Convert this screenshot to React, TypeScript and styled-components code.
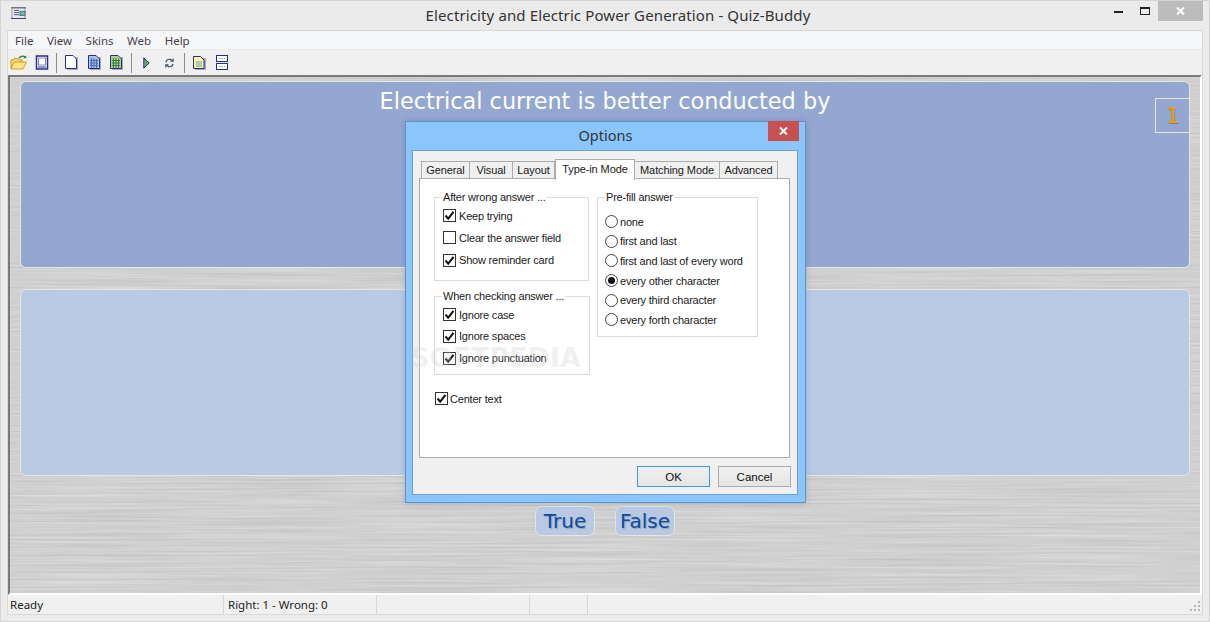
import React from 'react';
import styled, { createGlobalStyle } from 'styled-components';

const GlobalStyle = createGlobalStyle`
  html, body {
    margin: 0;
    padding: 0;
    width: 1210px;
    height: 622px;
    overflow: hidden;
    background: #ebebeb;
  }
  * {
    box-sizing: border-box;
  }
`;

const Window = styled.div`
  position: relative;
  width: 1210px;
  height: 622px;
  display: flex;
  flex-direction: column;
  background: #ebebeb;
  border: 1px solid #d4d4d4;
  font-family: 'Noto Sans', 'Open Sans', sans-serif;
  color: #111;
`;

const TitleBar = styled.div`
  position: relative;
  height: 29px;
  flex: none;
  display: flex;
  align-items: center;
  justify-content: center;
  padding: 0 0 2px 26px;
  font-size: 15px;
  letter-spacing: 0.12px;
  color: #333;
`;

const AppIcon = styled.svg`
  position: absolute;
  left: 9px;
  top: 6px;
`;

const Caption = styled.div`
  position: absolute;
  top: 0;
  right: 6px;
  display: flex;
  align-items: center;
  height: 20px;
`;

const CaptionButton = styled.div<{ $w: number; $close?: boolean }>`
  width: ${p => p.$w}px;
  height: 20px;
  display: flex;
  align-items: center;
  justify-content: center;
  background: ${p => (p.$close ? '#bcbcbc' : 'transparent')};
`;

const Client = styled.div`
  flex: 1;
  margin: 0 6px 6px 6px;
  display: flex;
  flex-direction: column;
  border: 1px solid #d9d9d9;
  border-bottom: none;
  min-height: 0;
`;

const MenuBar = styled.div`
  height: 19px;
  flex: none;
  display: flex;
  align-items: center;
  gap: 13.5px;
  padding: 1px 0 0 7px;
  background: #f5f6f8;
  border-bottom: 1px solid #ececec;
  font-size: 11.5px;
  color: #4a4048;
`;

const ToolBar = styled.div`
  height: 25px;
  flex: none;
  display: flex;
  align-items: center;
  background: #f0f0f0;
`;

const ToolSlot = styled.div`
  width: 22.5px;
  height: 22px;
  display: flex;
  align-items: center;
  justify-content: center;
`;

const ToolSep = styled.div`
  width: 1px;
  height: 20px;
  margin: 0 3.25px;
  background: #8d8d8d;
`;

const Stage = styled.div`
  position: relative;
  flex: 1;
  min-height: 0;
  display: flex;
  flex-direction: column;
  align-items: stretch;
  padding: 4px 10px 0 10px;
  border-top: 2px solid #7a7a7a;
  border-left: 2px solid #7a7a7a;
  border-right: 2px solid #fff;
  border-bottom: 2px solid #fff;
  background-color: #d0d0d0;
  overflow: hidden;
`;

const BrushedMetal = styled.svg`
  position: absolute;
  left: 0;
  top: 0;
  width: 100%;
  height: 100%;
`;

const QuestionCard = styled.div`
  position: relative;
  height: 187px;
  flex: none;
  background: #94a7d1;
  border: 1px solid #e6e6dc;
  border-radius: 6px;
  text-align: center;
  color: #fff;
  font-family: 'DejaVu Sans', sans-serif;
  font-size: 22.4px;
  line-height: 38px;
`;

const NumberBadge = styled.div`
  position: absolute;
  top: 16px;
  right: 0;
  width: 34px;
  height: 35px;
  border: 1px solid #e6e6dc;
  border-right: none;
  color: #f59d00;
  font-size: 22px;
  line-height: 33px;
  text-shadow: 1px 1px 0 #7f7f80;
`;

const AnswerCard = styled.div`
  position: relative;
  height: 187px;
  flex: none;
  margin-top: 21px;
  background: #bac9e4;
  border: 1px solid #e6e6dc;
  border-radius: 6px;
`;

const AnswerRow = styled.div`
  position: relative;
  display: flex;
  justify-content: center;
  gap: 20px;
  margin-top: 30px;
`;

const AnswerButton = styled.div`
  width: 60px;
  height: 30px;
  display: flex;
  align-items: center;
  justify-content: center;
  background: #b9c9e4;
  border: 1px solid #e6e6dc;
  border-radius: 7px;
  color: #0b4da3;
  font-family: 'DejaVu Sans', sans-serif;
  font-size: 20px;
  text-shadow: 1px 1px 1px rgba(90, 90, 90, 0.35);
`;

const StatusBar = styled.div`
  height: 20px;
  flex: none;
  display: flex;
  background: #f0f0f0;
  border-bottom: 1px solid #d9d9d9;
  font-size: 11.5px;
  position: relative;
`;

const StatusCell = styled.div<{ $w?: number; $pad?: number }>`
  ${p => (p.$w ? `width: ${p.$w}px;` : 'flex: 1;')}
  display: flex;
  align-items: center;
  padding-left: ${p => p.$pad ?? 0}px;
  border-right: 1px solid #d6d6d6;
  color: #222;

  &:last-of-type {
    border-right: none;
  }
`;

const Grip = styled.svg`
  position: absolute;
  right: 1px;
  bottom: 2px;
`;

const Dialog = styled.div`
  position: absolute;
  left: 404px;
  top: 120px;
  width: 401px;
  height: 382px;
  display: flex;
  flex-direction: column;
  background: #8ac5fb;
  border: 1px solid #5e93c9;
  box-shadow: 0 0 6px rgba(60, 70, 90, 0.25);
  font-family: 'Liberation Sans', Arial, sans-serif;
`;

const DialogTitle = styled.div`
  position: relative;
  height: 28px;
  flex: none;
  display: flex;
  align-items: center;
  justify-content: center;
  padding-bottom: 2px;
  font-family: 'Noto Sans', sans-serif;
  font-size: 14.5px;
  color: #30353d;
`;

const DialogClose = styled.div`
  position: absolute;
  top: -1px;
  right: 6px;
  width: 31px;
  height: 20px;
  display: flex;
  align-items: center;
  justify-content: center;
  background: #c75050;
`;

const DialogBody = styled.div`
  flex: 1;
  margin: 0 7px 7px 6px;
  padding: 9px 7px 0 6px;
  background: #f0f0f0;
  border: 1px solid #6f9ec9;
  display: flex;
  flex-direction: column;
  min-height: 0;
`;

const TabStrip = styled.div`
  height: 19px;
  flex: none;
  display: flex;
  align-items: flex-end;
  padding-left: 2px;
  position: relative;
  z-index: 1;
  font-size: 11px;
  letter-spacing: -0.1px;
`;

const Tab = styled.div<{ $active?: boolean; $w: number }>`
  width: ${p => p.$w}px;
  height: ${p => (p.$active ? 21 : 18)}px;
  display: flex;
  align-items: center;
  justify-content: center;
  background: ${p => (p.$active ? '#fff' : '#f0f0f0')};
  border: 1px solid #acacac;
  border-bottom: ${p => (p.$active ? 'none' : '1px solid #acacac')};
  margin-left: ${p => (p.$active ? 0 : -1)}px;
  margin-bottom: ${p => (p.$active ? -1 : 0)}px;
  padding-bottom: ${p => (p.$active ? 2 : 0)}px;
  color: #1a1a1a;

  &:first-child {
    margin-left: 0;
  }
`;

const TabPane = styled.div`
  height: 280px;
  flex: none;
  margin-top: -1px;
  padding: 11px 0 0 14px;
  background: #fff;
  border: 1px solid #acacac;
  font-size: 11px;
  letter-spacing: -0.2px;
  color: #1a1a1a;
`;

const Columns = styled.div`
  display: flex;
  align-items: flex-start;
  gap: 7px;
`;

const Column = styled.div`
  width: 156px;
  display: flex;
  flex-direction: column;
  gap: 8px;
`;

const Group = styled.fieldset<{ $w: number; $h: number; $gap: number; $top: number; $left: number }>`
  margin: 0;
  padding: ${p => p.$top}px 0 0 ${p => p.$left}px;
  width: ${p => p.$w}px;
  height: ${p => p.$h}px;
  border: 1px solid #dcdcdc;
  min-inline-size: 0;
  display: flex;
  flex-direction: column;
  gap: ${p => p.$gap}px;
`;

const Legend = styled.legend<{ $shift?: number }>`
  margin-left: ${p => p.$shift ?? -1}px;
  padding: 0 1px;
  font-size: 11px;
  line-height: 14px;
`;

const Option = styled.div<{ $gap?: number }>`
  display: flex;
  align-items: center;
  gap: ${p => p.$gap ?? 3}px;
  height: 15px;
  white-space: nowrap;
`;

const Check = styled.span`
  width: 13px;
  height: 13px;
  flex: none;
  display: flex;
  align-items: center;
  justify-content: center;
  border: 1px solid #333;
  background: #fff;
`;

const Radio = styled.span`
  width: 13px;
  height: 13px;
  flex: none;
  display: flex;
  align-items: center;
  justify-content: center;
  border: 1px solid #444;
  border-radius: 50%;
  background: #fff;
`;

const RadioDot = styled.span`
  width: 7px;
  height: 7px;
  border-radius: 50%;
  background: #111;
`;

const CenterOption = styled(Option)`
  margin-top: 16px;
  margin-left: 1px;
`;

const DialogFooter = styled.div`
  flex: 1;
  display: flex;
  justify-content: flex-end;
  align-items: flex-start;
  gap: 8px;
  padding: 8px 0 0 0;
  margin-right: -1px;
`;

const DialogButton = styled.div<{ $primary?: boolean }>`
  width: 73px;
  height: 21px;
  display: flex;
  align-items: center;
  justify-content: center;
  font-size: 11.5px;
  color: #111;
  background: linear-gradient(#f0f0f0, #e5e5e5);
  border: 1px solid ${p => (p.$primary ? '#3c9bf0' : '#acacac')};
`;

const Watermark = styled.div`
  position: absolute;
  left: 409px;
  top: 342px;
  font-family: 'DejaVu Sans', sans-serif;
  font-size: 27px;
  line-height: 30px;
  font-weight: 700;
  color: rgba(205, 205, 205, 0.28);
  pointer-events: none;
`;

const CheckMark = () => (
  <svg width="11" height="11" viewBox="0 0 11 11">
    <path d="M1.5 5.5 L4.2 8.6 L9.5 1.8" fill="none" stroke="#111" strokeWidth="2" />
  </svg>
);

const CheckOption = ({ label, checked = true }: { label: string; checked?: boolean }) => (
  <Option>
    <Check>{checked && <CheckMark />}</Check>
    {label}
  </Option>
);

const RadioOption = ({ label, checked = false }: { label: string; checked?: boolean }) => (
  <Option $gap={2}>
    <Radio>{checked && <RadioDot />}</Radio>
    {label}
  </Option>
);

const FolderIcon = () => (
  <svg width="18" height="16" viewBox="0 0 18 16">
    <path d="M1 14 V5 H3 L4 3.5 H8 L9 5 H12 V7" fill="#f3d97a" stroke="#c99a1c" />
    <path d="M1 14 L4 7 H16.5 L13 14 Z" fill="#fbe58c" stroke="#d1a11f" />
    <path d="M9 3 Q12 0 15 2" fill="none" stroke="#1d7d33" strokeWidth="1.3" />
    <path d="M13.5 3.5 L16.5 3 L15.5 0.5 Z" fill="#1d7d33" />
  </svg>
);

const PagesIcon = () => (
  <svg width="14" height="15" viewBox="0 0 14 15">
    <rect x="1.5" y="1" width="11" height="13" fill="#fff" stroke="#2a2a8c" strokeWidth="1.5" />
    <rect x="3.5" y="3" width="7" height="7" fill="#fff" stroke="#8a8ab0" />
    <path d="M3 12 H11" stroke="#2a2a8c" />
  </svg>
);

const PageIcon = ({ fill, grid }: { fill: string; grid?: string }) => (
  <svg width="13" height="15" viewBox="0 0 13 15">
    <rect x="2" y="2" width="11" height="13" fill="#a9a9b8" />
    <path d="M.5 .5 H8 L11.5 4 V13.5 H.5 Z" fill={fill} stroke="#2a2a8c" />
    {grid && (
      <path d="M2 5.5 H10 M2 8 H10 M2 10.5 H10 M3.5 3 V13 M6 3 V13 M8.5 4 V13" stroke={grid} />
    )}
  </svg>
);

const PlayIcon = () => (
  <svg width="7" height="12" viewBox="0 0 7 12">
    <path d="M.8 .8 L6.2 6 L.8 11.2 Z" fill="#5fb05a" stroke="#2a2a8c" strokeWidth="1" />
  </svg>
);

const RefreshIcon = () => (
  <svg width="11" height="12" viewBox="0 0 12 12" fill="none" stroke="#3c4a5c" strokeWidth="1.2">
    <path d="M2 5 Q3 1.5 7 2 L9.5 3.5" />
    <path d="M10 7 Q9 10.5 5 10 L2.5 8.5" />
    <path d="M10 1 V4 H7" />
    <path d="M2 11 V8 H5" />
  </svg>
);

const NoteIcon = () => (
  <svg width="13" height="14" viewBox="0 0 13 14">
    <rect x="2" y="2" width="11" height="12" fill="#a9a9b8" />
    <path d="M.5 .5 H7.5 L11 4 V12.5 H.5 Z" fill="#fdf3a0" stroke="#2a2a8c" />
    <path d="M3 6 H9 M3 8 H9 M3 10 H9" stroke="#5aa0c8" />
  </svg>
);

const SplitIcon = () => (
  <svg width="12" height="15" viewBox="0 0 12 15">
    <rect x=".5" y=".5" width="11" height="6" fill="#fff" stroke="#2a2a8c" />
    <rect x=".5" y="8.5" width="11" height="6" fill="#fff" stroke="#2a2a8c" />
    <path d="M3 3.5 H9 M3 11.5 H9" stroke="#7cc56c" strokeDasharray="1.5 1" />
  </svg>
);

const CloseGlyph = ({ color }: { color: string }) => (
  <svg width="9" height="8" viewBox="0 0 9 8">
    <path d="M1 .5 L8 7.5 M8 .5 L1 7.5" stroke={color} strokeWidth="2" />
  </svg>
);

export default function App() {
  return (
    <>
      <GlobalStyle />
      <Window>
        <TitleBar>
          <AppIcon width="17" height="12" viewBox="0 0 17 14" preserveAspectRatio="none">
            <path d="M1 1 H16 M1 13.5 H16" stroke="#2a2a5c" />
            <path d="M2 1 V13 M15 1 V13" stroke="#8a8ab0" />
            <path d="M4 4 H9 M4 6.5 H9 M4 9 H9" stroke="#4a4a8c" />
            <rect x="10" y="5" width="5" height="5" fill="#6fc08a" stroke="#4a6a9c" />
            <rect x="1" y="2" width="2" height="2" fill="#d8c060" />
          </AppIcon>
          Electricity and Electric Power Generation - Quiz-Buddy
          <Caption>
            <CaptionButton $w={28}>
              <svg width="9" height="3" viewBox="0 0 9 3">
                <rect width="9" height="2" y="1" fill="#222" />
              </svg>
            </CaptionButton>
            <CaptionButton $w={26}>
              <svg width="10" height="8" viewBox="0 0 10 8">
                <rect x=".5" y=".5" width="9" height="7" fill="none" stroke="#222" />
                <rect width="10" height="2" fill="#222" />
              </svg>
            </CaptionButton>
            <CaptionButton $w={45} $close>
              <CloseGlyph color="#fff" />
            </CaptionButton>
          </Caption>
        </TitleBar>
        <Client>
          <MenuBar>
            <span>File</span>
            <span>View</span>
            <span>Skins</span>
            <span>Web</span>
            <span>Help</span>
          </MenuBar>
          <ToolBar>
            <ToolSlot><FolderIcon /></ToolSlot>
            <ToolSlot><PagesIcon /></ToolSlot>
            <ToolSep />
            <ToolSlot><PageIcon fill="#fff" /></ToolSlot>
            <ToolSlot><PageIcon fill="#a9c4ea" grid="#4a6ab0" /></ToolSlot>
            <ToolSlot><PageIcon fill="#a5d38a" grid="#3a7a4a" /></ToolSlot>
            <ToolSep />
            <ToolSlot><PlayIcon /></ToolSlot>
            <ToolSlot><RefreshIcon /></ToolSlot>
            <ToolSep />
            <ToolSlot><NoteIcon /></ToolSlot>
            <ToolSlot><SplitIcon /></ToolSlot>
          </ToolBar>
          <Stage>
            <BrushedMetal>
              <filter id="brushed" x="0" y="0" width="100%" height="100%" colorInterpolationFilters="sRGB">
                <feTurbulence type="fractalNoise" baseFrequency="0.006 0.5" numOctaves="3" seed="4" />
                <feColorMatrix values="0.13 0 0 0 0.75  0.13 0 0 0 0.75  0.13 0 0 0 0.75  0 0 0 0 1" />
              </filter>
              <rect width="100%" height="100%" filter="url(#brushed)" />
            </BrushedMetal>
            <QuestionCard>
              Electrical current is better conducted by
              <NumberBadge>1</NumberBadge>
            </QuestionCard>
            <AnswerCard />
            <AnswerRow>
              <AnswerButton>True</AnswerButton>
              <AnswerButton>False</AnswerButton>
            </AnswerRow>
          </Stage>
          <StatusBar>
            <StatusCell $w={216} $pad={2}>Ready</StatusCell>
            <StatusCell $w={153} $pad={4}>Right: 1 - Wrong: 0</StatusCell>
            <StatusCell $w={153} />
            <StatusCell $w={58} />
            <StatusCell />
            <Grip width="11" height="11" viewBox="0 0 11 11" fill="#b4b4b4">
              <rect x="8" y="0" width="2" height="2" />
              <rect x="4" y="4" width="2" height="2" />
              <rect x="8" y="4" width="2" height="2" />
              <rect x="0" y="8" width="2" height="2" />
              <rect x="4" y="8" width="2" height="2" />
              <rect x="8" y="8" width="2" height="2" />
            </Grip>
          </StatusBar>
        </Client>
        <Dialog>
          <DialogTitle>
            Options
            <DialogClose><CloseGlyph color="#fff" /></DialogClose>
          </DialogTitle>
          <DialogBody>
            <TabStrip>
              <Tab $w={49}>General</Tab>
              <Tab $w={44}>Visual</Tab>
              <Tab $w={43}>Layout</Tab>
              <Tab $w={80} $active>Type-in Mode</Tab>
              <Tab $w={86}>Matching Mode</Tab>
              <Tab $w={59}>Advanced</Tab>
            </TabStrip>
            <TabPane>
              <Columns>
                <Column>
                  <Group $w={155} $h={91} $gap={7.4} $top={4} $left={8}>
                    <Legend>After wrong answer ...</Legend>
                    <CheckOption label="Keep trying" />
                    <CheckOption label="Clear the answer field" checked={false} />
                    <CheckOption label="Show reminder card" />
                  </Group>
                  <Group $w={156} $h={86} $gap={6.8} $top={4} $left={8}>
                    <Legend>When checking answer ...</Legend>
                    <CheckOption label="Ignore case" />
                    <CheckOption label="Ignore spaces" />
                    <CheckOption label="Ignore punctuation" />
                  </Group>
                </Column>
                <Group $w={161} $h={147} $gap={4.7} $top={10} $left={7}>
                  <Legend $shift={0}>Pre-fill answer</Legend>
                  <RadioOption label="none" />
                  <RadioOption label="first and last" />
                  <RadioOption label="first and last of every word" />
                  <RadioOption label="every other character" checked />
                  <RadioOption label="every third character" />
                  <RadioOption label="every forth character" />
                </Group>
              </Columns>
              <CenterOption $gap={2}>
                <Check><CheckMark /></Check>
                Center text
              </CenterOption>
            </TabPane>
            <DialogFooter>
              <DialogButton $primary>OK</DialogButton>
              <DialogButton>Cancel</DialogButton>
            </DialogFooter>
          </DialogBody>
        </Dialog>
        <Watermark>SOFTPEDIA</Watermark>
      </Window>
    </>
  );
}
